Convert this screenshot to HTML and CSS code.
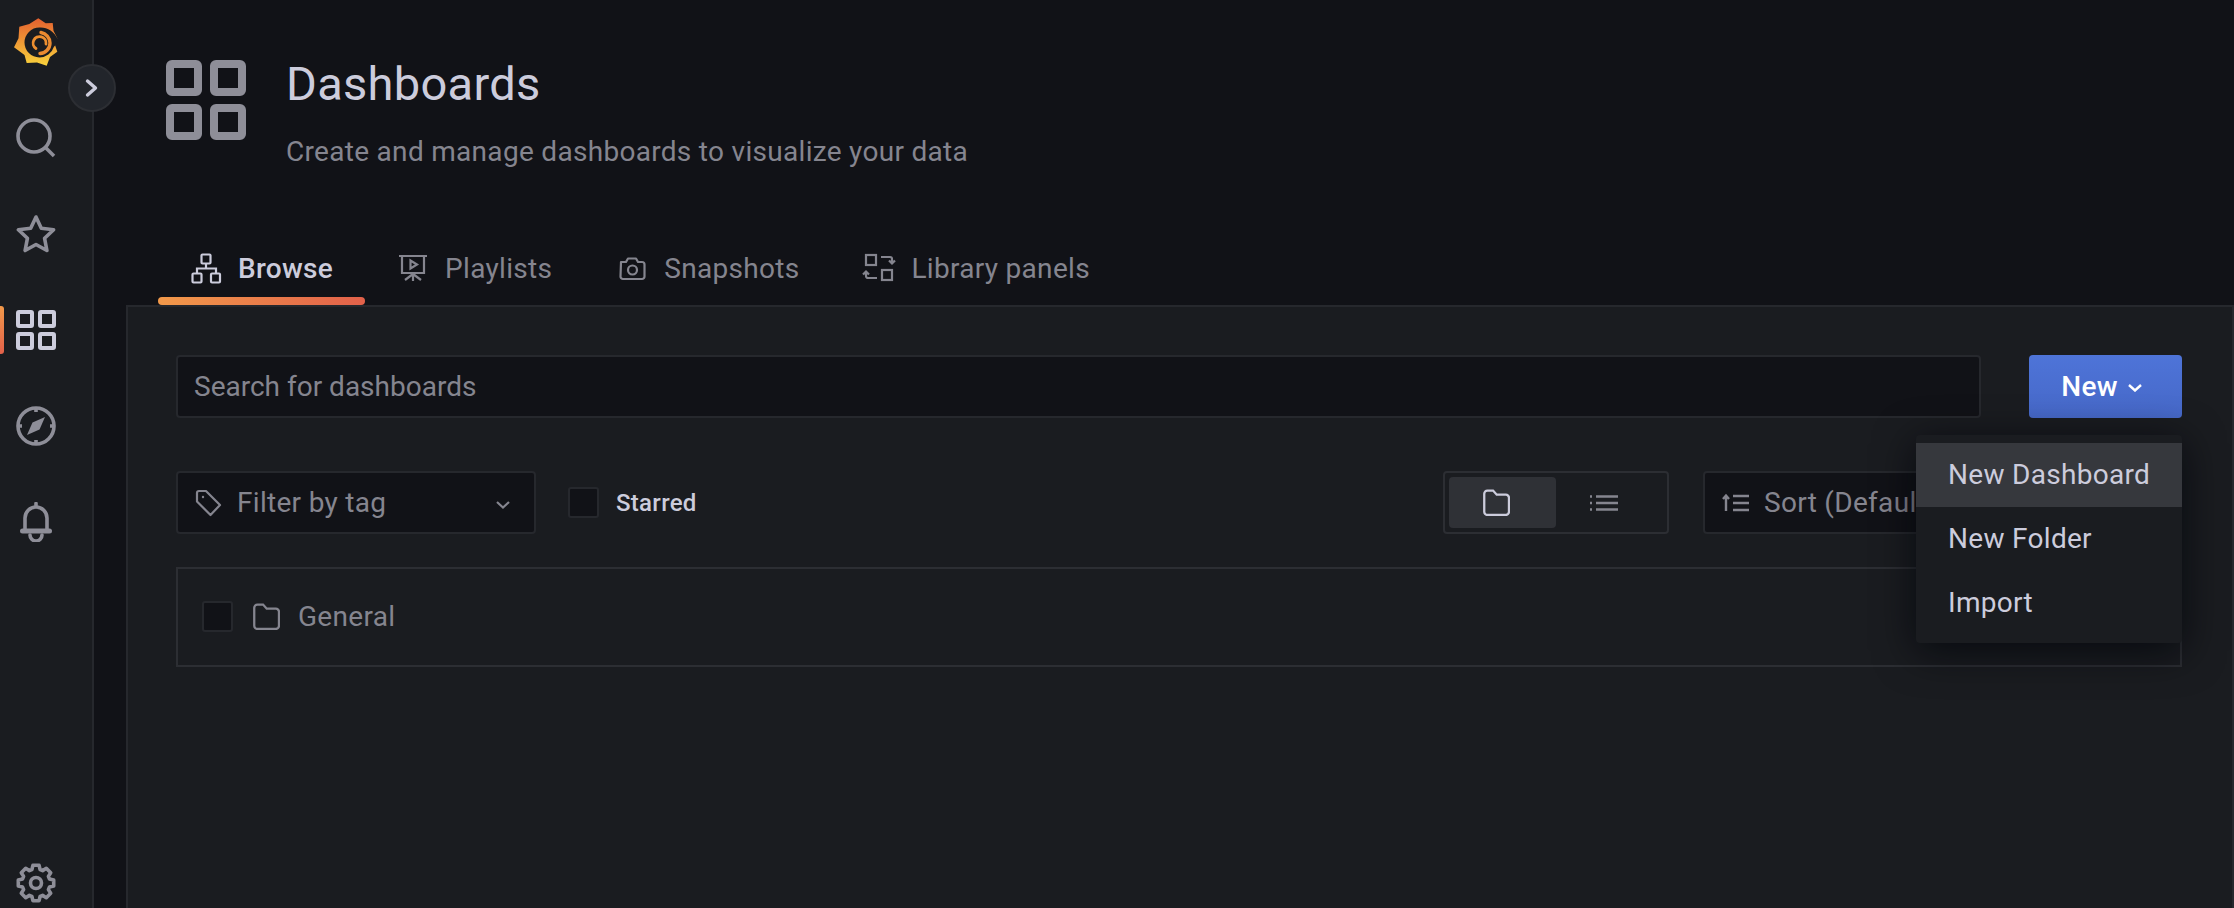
FILE: index.html
```html
<!DOCTYPE html>
<html lang="en">
<head>
<meta charset="utf-8">
<title>Dashboards</title>
<link rel="stylesheet" href="styles.css">
</head>
<body>
<aside class="sidebar">
  <div class="logo-item">
    <svg class="logo" viewBox="0 0 44 48" width="44" height="48">
      <defs><linearGradient id="lg" x1="0" y1="0" x2="0" y2="1"><stop offset="0" stop-color="#e4602f"/><stop offset="1" stop-color="#f9d23c"/></linearGradient></defs>
      <path fill="url(#lg)" d="M24.300 .3L31.700 5.300 38.700 5 39.500 12.700 43.300 20.300 41 27 43.300 33.700 36 39 32.700 47.700 23 44.500 12.700 45 10.500 37 0 29.300 4.500 20.300 5.300 8.700 15.300 6z"/>
      <path fill="#1a1c20" d="M44 21.500C40 13 33 9 25.500 9.500A15 15 0 0 0 25.500 39.500A15 15 0 0 0 39.800 29L44 24z"/>
      <path fill="none" stroke="#ea8a30" stroke-width="3.400" stroke-linecap="round" d="M27 14.500A11 11 0 0 1 36 25A10.500 10.500 0 0 1 26 35.500"/>
      <path fill="none" stroke="#ed8f30" stroke-width="2.800" stroke-linecap="round" d="M22 30.500A6.500 6.500 0 1 1 32 26"/>
    </svg>
  </div>
  <div class="nav-item">
    <svg class="nav-icon" viewBox="0 0 40 40"><circle cx="18" cy="18" r="16"/><path d="M30 30l8 8"/></svg>
  </div>
  <div class="nav-item">
    <svg class="nav-icon" viewBox="0 0 40 40"><path stroke-linejoin="round" d="M20 3l5.300 11.200 12.300 1.600-9 8.500 2.300 12.200L20 30.500 9.100 36.500l2.300-12.200-9-8.500 12.300-1.600z"/></svg>
  </div>
  <div class="nav-item nav-item-active">
    <svg class="nav-icon" viewBox="0 0 40 40"><rect x="2" y="2" width="14" height="14" rx="1"/><rect x="24" y="2" width="14" height="14" rx="1"/><rect x="2" y="24" width="14" height="14" rx="1"/><rect x="24" y="24" width="14" height="14" rx="1"/></svg>
  </div>
  <div class="nav-item">
    <svg class="nav-icon" viewBox="0 0 40 40"><circle cx="20" cy="20" r="18"/><path d="M20 2v4M20 34v4M2 20h4M34 20h4"/><path class="solid" d="M29 11l-5.500 12.500L11 29l5.500-12.500z"/></svg>
  </div>
  <div class="nav-item">
    <svg class="nav-icon" viewBox="0 0 40 40"><path stroke-linecap="round" d="M20 1.500V5M9 27V16a11 11 0 0 1 22 0v11M14 33a6 6 0 0 0 12 0"/><path class="bell-base" stroke-linecap="round" d="M6.500 29h27"/></svg>
  </div>
  <div class="nav-item nav-item-bottom">
    <svg class="nav-icon" viewBox="0 0 40 40"><path stroke-linejoin="round" d="M16.900 2.300h6.200l1 4.300 2.500 1 3.700-2.300 4.400 4.400-2.300 3.700 1 2.500 4.300 1v6.200l-4.300 1-1 2.500 2.300 3.700-4.400 4.400-3.700-2.300-2.500 1-1 4.300h-6.200l-1-4.300-2.500-1-3.700 2.300-4.400-4.400 2.300-3.700-1-2.500-4.300-1v-6.200l4.300-1 1-2.500-2.300-3.700 4.400-4.400 3.700 2.300 2.500-1z"/><circle cx="20" cy="20" r="5.500"/></svg>
  </div>
</aside>
<button class="nav-toggle">
  <svg viewBox="0 0 16 20" width="16" height="20"><path d="M3.500 3l8 7-8 7"/></svg>
</button>
<main class="main">
  <header class="page-header">
    <svg class="page-icon" viewBox="0 0 40 40"><rect x="2" y="2" width="14" height="14" rx="1"/><rect x="24" y="2" width="14" height="14" rx="1"/><rect x="2" y="24" width="14" height="14" rx="1"/><rect x="24" y="24" width="14" height="14" rx="1"/></svg>
    <div class="page-heading">
      <h1 class="page-title">Dashboards</h1>
      <p class="page-sub">Create and manage dashboards to visualize your data</p>
    </div>
  </header>
  <nav class="tabs">
    <a class="tab tab-active">
      <svg class="tab-icon" viewBox="0 0 30 30"><rect x="10.500" y="1.500" width="9" height="9" rx="1"/><rect x="1.500" y="20.500" width="9" height="9" rx="1"/><rect x="20" y="20.500" width="9" height="9" rx="1"/><path d="M15 10.500v5M6 20.500v-5h19v5"/></svg>
      <span>Browse</span>
    </a>
    <a class="tab">
      <svg class="tab-icon" viewBox="0 0 30 30"><path d="M1 3h28M4 3v17h22V3M15 20v8M15 21l-8 6M15 21l8 6"/><path d="M12.500 7.500v8l6.500-4z"/></svg>
      <span>Playlists</span>
    </a>
    <a class="tab">
      <svg class="tab-icon" viewBox="0 0 30 30"><path stroke-linejoin="round" d="M4 9h5l2-3.500h8L21 9h4a2.500 2.500 0 0 1 2.500 2.500v12a2.500 2.500 0 0 1-2.500 2.500H6a2.500 2.500 0 0 1-2.500-2.500z"/><circle cx="15.500" cy="17" r="4.500"/></svg>
      <span>Snapshots</span>
    </a>
    <a class="tab">
      <svg class="tab-icon" viewBox="0 0 30 30"><rect x="2" y="2" width="10" height="10"/><rect x="18" y="17" width="10" height="10"/><path d="M17 4h9a2 2 0 0 1 2 2v4M25 7.500l3 3 3-3M13 25H4a2 2 0 0 1-2-2v-4M-1 21.500l3-3 3 3"/></svg>
      <span>Library panels</span>
    </a>
  </nav>
  <section class="panel">
    <div class="search-row">
      <div class="field search-field">Search for dashboards</div>
      <div class="new-wrap">
        <button class="new-btn">New
          <svg viewBox="0 0 14 8" width="14" height="8"><path d="M1 1l6 5.500L13 1"/></svg>
        </button>
        <div class="menu">
          <div class="menu-item menu-item-hover">New Dashboard</div>
          <div class="menu-item">New Folder</div>
          <div class="menu-item">Import</div>
        </div>
      </div>
    </div>
    <div class="filter-row">
      <div class="field filter-field">
        <svg class="tag-icon" viewBox="0 0 28 28"><path stroke-linejoin="round" d="M2 4a2 2 0 0 1 2-2h7l14 14-9.500 10L2 12.500z"/><circle class="solid" cx="8" cy="8" r="1.200"/></svg>
        <span>Filter by tag</span>
        <svg class="chevron" viewBox="0 0 14 8" width="14" height="8"><path d="M1 1l6 5.500L13 1"/></svg>
      </div>
      <div class="checkbox starred-box"></div>
      <span class="starred">Starred</span>
      <div class="layout-toggle">
        <div class="toggle-opt toggle-opt-on">
          <svg class="folder-icon" viewBox="0 0 26 26"><path d="M1.200 4.500a3 3 0 0 1 3-3h5.500l3.500 4H22a3 3 0 0 1 3 3V22a3 3 0 0 1-3 3H4.200a3 3 0 0 1-3-3z"/></svg>
        </div>
        <div class="toggle-opt">
          <svg class="list-icon" viewBox="0 0 28 18"><path d="M0 2.500h2M0 9h2M0 15.500h2M6 2.500h22M6 9h22M6 15.500h22"/></svg>
        </div>
      </div>
      <div class="field sort-field">
        <svg class="sort-icon" viewBox="0 0 28 20"><path d="M4 18V3M1 6l3-3.500L7 6M11 3h16M11 10h16M11 17h16"/></svg>
        <span>Sort (Default A-Z)</span>
      </div>
    </div>
    <div class="folder-row">
      <div class="checkbox"></div>
      <svg class="folder-icon row-folder" viewBox="0 0 26 26"><path d="M1.200 4.500a3 3 0 0 1 3-3h5.500l3.500 4H22a3 3 0 0 1 3 3V22a3 3 0 0 1-3 3H4.200a3 3 0 0 1-3-3z"/></svg>
      <span>General</span>
    </div>
  </section>
</main>
</body>
</html>
```
FILE: styles.css
```css
* { box-sizing: border-box; }
html, body { height: 100%; }
body {
  margin: 0;
  display: flex;
  height: 908px;
  overflow: hidden;
  background: #111217;
  color: #ccccdc;
  font-family: Roboto, "Liberation Sans", sans-serif;
  font-size: 28px;
  letter-spacing: 0.3px;
}
svg { display: block; flex: none; fill: none; stroke: currentColor; }
.solid { fill: currentColor; stroke: none; }

.sidebar {
  width: 94px;
  flex: none;
  display: flex;
  flex-direction: column;
  background: #1a1c20;
  border-right: 2px solid #26282d;
  color: #8e8e98;
}
.logo-item { height: 90px; padding: 18px 0 0 14px; }
.logo { stroke: none; }
.nav-item {
  position: relative;
  width: 72px;
  height: 96px;
  display: flex;
  align-items: center;
  justify-content: center;
}
.nav-icon { width: 40px; height: 40px; stroke-width: 3.6; }
.bell-base { stroke-width: 5; }
.nav-item-active { color: #ccccdc; }
.nav-item-active .nav-icon { stroke-width: 4; }
.nav-item-active::before {
  content: "";
  position: absolute;
  left: 0;
  top: 24px;
  width: 4px;
  height: 48px;
  border-radius: 0 3px 3px 0;
  background: linear-gradient(#f2994a, #e2614a);
}
.nav-item-bottom { margin-top: auto; height: 45px; align-items: flex-start; }

.nav-toggle {
  position: absolute;
  left: 68px;
  top: 64px;
  width: 48px;
  height: 48px;
  padding: 0;
  display: flex;
  align-items: center;
  justify-content: center;
  border: 2px solid #2c2e33;
  border-radius: 50%;
  background: #22252b;
  color: #ccccdc;
}
.nav-toggle svg { stroke-width: 3.4; stroke-linecap: round; stroke-linejoin: round; }

.main {
  flex: 1;
  min-width: 0;
  display: flex;
  flex-direction: column;
}
.page-header {
  display: flex;
  gap: 40px;
  padding: 58px 0 0 72px;
  height: 233px;
}
.page-icon { width: 80px; height: 80px; margin-top: 2px; stroke-width: 4; color: #8e8e98; }
.page-title {
  margin: 0;
  font-size: 47px;
  font-weight: 400;
  line-height: 52px;
}
.page-sub {
  margin: 22px 0 0;
  color: #85858f;
  font-size: 28px;
  line-height: 40px;
}

.tabs {
  display: flex;
  height: 72px;
  margin-left: 64px;
}
.tab {
  position: relative;
  display: flex;
  align-items: center;
  gap: 17px;
  padding: 0 32px 2px 33px;
  color: #85858f;
}
.tab-icon { width: 30px; height: 30px; stroke-width: 2.2; overflow: visible; }
.tab-active { color: #ccccdc; font-weight: 500; }
.tab-active::after {
  content: "";
  position: absolute;
  left: 0;
  right: 0;
  bottom: 0;
  height: 8px;
  border-radius: 4px;
  background: linear-gradient(90deg, #f2994a, #e2614a);
}

.panel {
  flex: 1;
  margin-left: 32px;
  padding: 48px 50px 0 48px;
  background: #1a1c20;
  border: solid #26282d;
  border-width: 2px 2px 0;
}
.search-row { display: flex; gap: 48px; margin-bottom: 53px; }
.field {
  display: flex;
  align-items: center;
  height: 63px;
  border: 2px solid #26282d;
  border-radius: 4px;
  background: #111217;
  color: #85858f;
  padding: 0 16px;
}
.search-field { flex: 1; letter-spacing: 0; }
.new-wrap { position: relative; }
.new-btn {
  display: flex;
  align-items: center;
  justify-content: center;
  gap: 10px;
  width: 153px;
  height: 63px;
  padding: 0 8px 0 0;
  border: 0;
  border-radius: 4px;
  background: linear-gradient(#4e74d8, #4668c8);
  color: #fff;
  font: 500 28px Roboto, sans-serif;
  letter-spacing: 0.3px;
}
.new-btn svg { stroke-width: 2.4; margin-top: 2px; }
.menu {
  position: absolute;
  top: 80px;
  right: 0;
  width: 266px;
  padding: 8px 0;
  z-index: 5;
  background: #1a1c20;
  border-radius: 4px;
  box-shadow: 0 8px 40px rgba(1, 4, 9, 0.75);
}
.menu-item {
  display: flex;
  align-items: center;
  height: 64px;
  padding: 0 0 2px 32px;
}
.menu-item-hover { background: #36383d; }

.filter-row { display: flex; align-items: center; margin-bottom: 33px; }
.filter-field { width: 360px; padding-left: 17px; }
.tag-icon { width: 28px; height: 28px; stroke-width: 2.2; margin-right: 14px; }
.chevron { margin-left: auto; margin-right: 8px; stroke-width: 2.2; margin-top: 4px; }
.checkbox {
  width: 31px;
  height: 31px;
  flex: none;
  border: 2px solid #26282d;
  border-radius: 3px;
  background: #111217;
}
.starred-box { margin-left: 32px; }
.starred {
  margin-left: 17px;
  font-size: 24px;
  font-weight: 500;
}
.layout-toggle {
  display: flex;
  width: 226px;
  height: 63px;
  margin-left: auto;
  padding: 4px;
  border: 2px solid #2c2e33;
  border-radius: 4px;
}
.toggle-opt {
  flex: 1;
  display: flex;
  align-items: center;
  justify-content: center;
  padding-right: 12px;
  border-radius: 4px;
  color: #85858f;
}
.toggle-opt-on { background: #2f3136; color: #ccccdc; }
.folder-icon { width: 27px; height: 27px; stroke-width: 2.2; }
.list-icon { width: 28px; height: 18px; stroke-width: 2.4; }
.sort-field { width: 330px; margin: 0 149px 0 34px; white-space: nowrap; padding-left: 17px; }
.sort-icon { width: 28px; height: 20px; stroke-width: 2.4; margin-right: 14px; }

.folder-row {
  display: flex;
  align-items: center;
  height: 100px;
  padding: 0 0 2px 24px;
  border: 2px solid #2c2e33;
  color: #85858f;
}
.row-folder { margin: 0 18px 0 20px; }
```
